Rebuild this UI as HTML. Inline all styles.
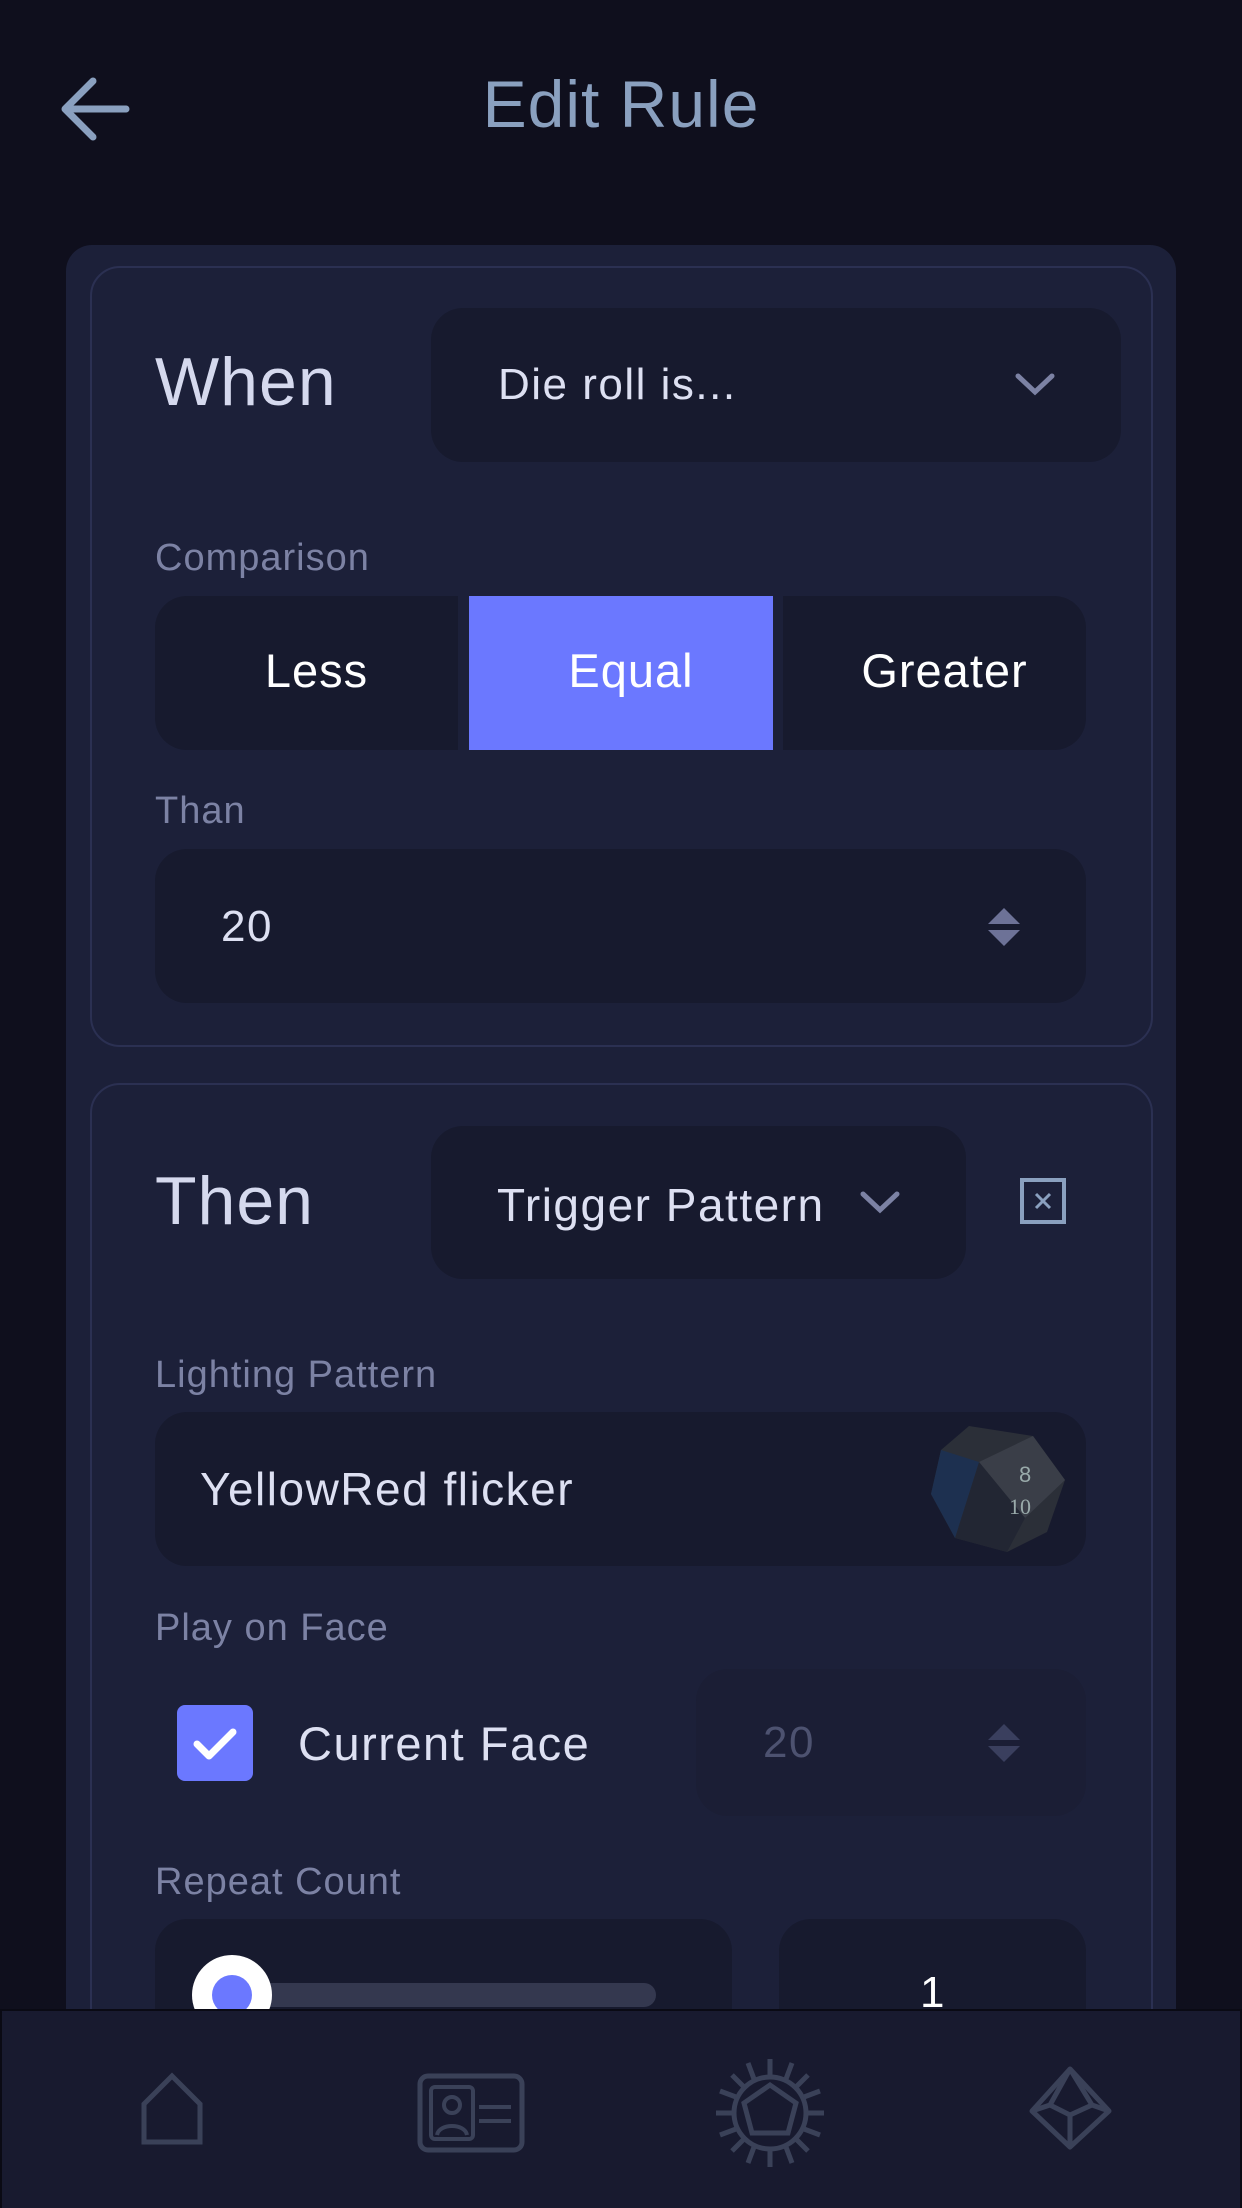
<!DOCTYPE html>
<html><head><meta charset="utf-8"><style>
*{box-sizing:border-box;margin:0;padding:0}
body{width:1242px;height:2208px;background:#0f0f1d;font-family:"Liberation Sans",sans-serif;position:relative;overflow:hidden;color:#d6daee}
.a{position:absolute}
.title{left:0;width:1242px;top:66px;text-align:center;font-size:66px;color:#8aa0bf;letter-spacing:1px}
.outer{left:66px;top:245px;width:1110px;height:1900px;background:#1c2039;border-radius:26px}
.card{border:2px solid #2b3052;border-radius:30px;background:#1c2039}
.box{background:#171a2e;border-radius:32px}
.lbl{font-size:38px;color:#7c82a4;left:155px;letter-spacing:1px}
.big{font-size:68px;color:#d5d9ee;letter-spacing:1px}
.txt{font-size:44px;color:#dde0f2;letter-spacing:1.5px}
</style></head><body>
<svg class="a" style="left:60px;top:76px" width="70" height="66" viewBox="0 0 70 66"><path d="M66 33H6M33 5L5 33l28 28" stroke="#8aa0bf" stroke-width="7" fill="none" stroke-linecap="round" stroke-linejoin="round"/></svg>
<div class="a title">Edit Rule</div>
<div class="a outer"></div>
<div class="a card" style="left:90px;top:266px;width:1063px;height:781px"></div>
<div class="a big" style="left:155px;top:343px">When</div>
<div class="a box" style="left:431px;top:308px;width:690px;height:154px"></div>
<div class="a txt" style="left:498px;top:360px">Die roll is...</div>
<svg class="a" style="left:1014px;top:372px" width="42" height="24"><path d="M4 4l17 16 17-16" stroke="#7c82a4" stroke-width="5" fill="none" stroke-linecap="round"/></svg>
<div class="a lbl" style="top:537px">Comparison</div>
<div class="a box" style="left:155px;top:596px;width:303px;height:154px;border-radius:32px 0 0 32px"></div>
<div class="a" style="left:469px;top:596px;width:304px;height:154px;background:#6b78ff"></div>
<div class="a box" style="left:783px;top:596px;width:303px;height:154px;border-radius:0 32px 32px 0"></div>
<div class="a" style="left:165px;top:643px;width:303px;text-align:center;font-size:47px;color:#fff;letter-spacing:1px">Less</div>
<div class="a" style="left:479px;top:643px;width:304px;text-align:center;font-size:47px;color:#fff;letter-spacing:1px">Equal</div>
<div class="a" style="left:793px;top:643px;width:303px;text-align:center;font-size:47px;color:#fff;letter-spacing:1px">Greater</div>
<div class="a lbl" style="top:790px">Than</div>
<div class="a box" style="left:155px;top:849px;width:931px;height:154px"></div>
<div class="a txt" style="left:221px;top:902px">20</div>
<svg class="a" style="left:986px;top:904px" width="36" height="46"><path d="M2 20L18 4l16 16zM2 26l16 16 16-16z" fill="#6d7297"/></svg>
<div class="a card" style="left:90px;top:1083px;width:1063px;height:1100px"></div>
<div class="a big" style="left:155px;top:1162px">Then</div>
<div class="a box" style="left:431px;top:1126px;width:535px;height:153px"></div>
<div class="a txt" style="left:497px;top:1178px;font-size:46px">Trigger Pattern</div>
<svg class="a" style="left:859px;top:1190px" width="42" height="24"><path d="M4 4l17 16 17-16" stroke="#7c82a4" stroke-width="5" fill="none" stroke-linecap="round"/></svg>
<svg class="a" style="left:1020px;top:1178px" width="46" height="46"><rect x="2" y="2" width="42" height="42" fill="none" stroke="#8aa0bf" stroke-width="4"/><path d="M16 16l14 14M30 16L16 30" stroke="#8aa0bf" stroke-width="3"/></svg>
<div class="a lbl" style="top:1354px">Lighting Pattern</div>
<div class="a box" style="left:155px;top:1412px;width:931px;height:154px"></div>
<div class="a txt" style="left:200px;top:1462px;font-size:46px">YellowRed flicker</div>
<svg class="a" style="left:929px;top:1422px" width="138" height="132" viewBox="0 0 138 132"><polygon points="40,4 104,14 136,58 118,110 78,130 26,116 2,72 12,28" fill="#2b2f38"/><polygon points="50,40 104,14 136,58 96,96" fill="#3a3e48"/><polygon points="26,116 50,40 96,96 78,130" fill="#222633"/><polygon points="2,72 12,28 50,40 26,116" fill="#1d3050"/><text x="80" y="92" font-size="22" fill="#9aa" font-family="Liberation Serif">10</text><text x="90" y="60" font-size="22" fill="#9aa">8</text></svg>
<div class="a lbl" style="top:1607px">Play on Face</div>
<div class="a" style="left:177px;top:1705px;width:76px;height:76px;background:#6b78ff;border-radius:8px"></div>
<svg class="a" style="left:177px;top:1705px" width="76" height="76"><path d="M20 39l12 12 24-24" stroke="#fff" stroke-width="7" fill="none" stroke-linecap="round" stroke-linejoin="round"/></svg>
<div class="a txt" style="left:298px;top:1716px;font-size:47px">Current Face</div>
<div class="a" style="left:696px;top:1669px;width:390px;height:147px;background:#1b1e35;border-radius:32px"></div>
<div class="a txt" style="left:763px;top:1718px;color:#4d5270">20</div>
<svg class="a" style="left:986px;top:1720px" width="36" height="46"><path d="M2 20L18 4l16 16zM2 26l16 16 16-16z" fill="#3a3f5e"/></svg>
<div class="a lbl" style="top:1861px">Repeat Count</div>
<div class="a box" style="left:155px;top:1919px;width:577px;height:154px"></div>
<div class="a" style="left:260px;top:1983px;width:396px;height:24px;background:#34384f;border-radius:12px"></div>
<div class="a" style="left:192px;top:1955px;width:80px;height:80px;border-radius:50%;background:#fff"></div>
<div class="a" style="left:212px;top:1975px;width:40px;height:40px;border-radius:50%;background:#6b78ff"></div>
<div class="a box" style="left:779px;top:1919px;width:307px;height:154px"></div>
<div class="a txt" style="left:920px;top:1968px;color:#fff">1</div>
<div class="a" style="left:0;top:2009px;width:1242px;height:199px;background:#181a2f;border-top:2px solid #0a0a14;border-left:2px solid #0a0a14;border-right:2px solid #0a0a14"></div>
<svg class="a" style="left:138px;top:2070px" width="68" height="76"><path d="M6 72V34L34 6l28 28v38z" stroke="#3a4158" stroke-width="5" fill="none"/></svg>
<svg class="a" style="left:417px;top:2073px" width="108" height="80"><rect x="3" y="3" width="102" height="74" rx="8" stroke="#3a4158" stroke-width="5" fill="none"/><rect x="14" y="14" width="42" height="52" rx="4" stroke="#3a4158" stroke-width="4" fill="none"/><circle cx="35" cy="32" r="8" stroke="#3a4158" stroke-width="4" fill="none"/><path d="M20 62c2-12 28-12 30 0M62 34h32M62 48h32" stroke="#3a4158" stroke-width="4" fill="none"/></svg>
<svg class="a" style="left:712px;top:2055px" width="116" height="116" viewBox="0 0 116 116" stroke="#3a4158" stroke-width="5" fill="none"><polygon points="58,30 84,48 76,78 40,78 32,48"/><circle cx="58" cy="58" r="36"/><path d="M58 4v18M58 94v18M4 58h18M94 58h18M20 20l13 13M83 83l13 13M96 20L83 33M33 83L20 96M36 8l6 16M80 8l-6 16M36 108l6-16M80 108l-6-16M8 36l16 6M8 80l16-6M108 36l-16 6M108 80l-16-6"/></svg>
<svg class="a" style="left:1028px;top:2064px" width="86" height="90" viewBox="0 0 86 90" stroke="#3a4158" stroke-width="5" fill="none" stroke-linejoin="round"><polygon points="42,5 81,47 42,83 4,47"/><path d="M42 5L22 41 4 47M42 5l22 36 17 6M22 41l20 10 22-10M42 51v32"/></svg>
</body></html>
